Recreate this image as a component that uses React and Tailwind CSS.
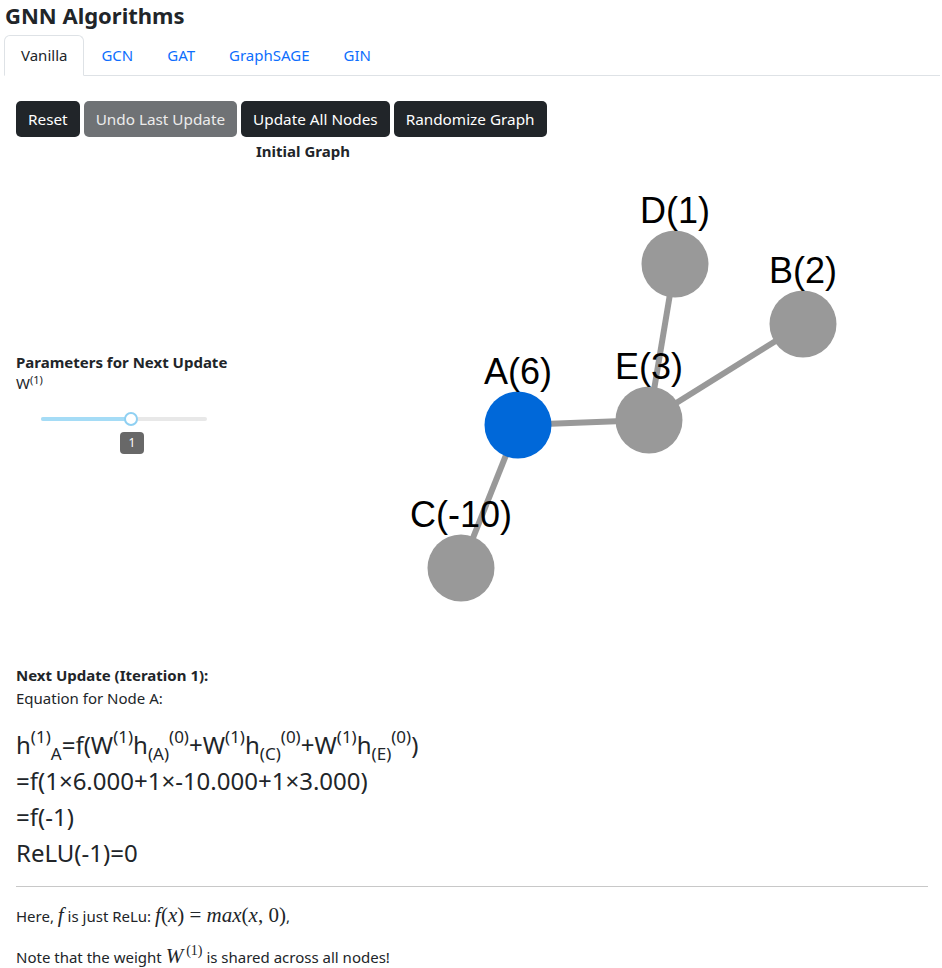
import React from "react";

const nodes = [
  { id: "D", v: 1, x: 335, y: 103 },
  { id: "B", v: 2, x: 463, y: 163 },
  { id: "E", v: 3, x: 309, y: 259 },
  { id: "A", v: 6, x: 178, y: 264, active: true },
  { id: "C", v: -10, x: 121, y: 407 },
];
const byId = Object.fromEntries(nodes.map((n) => [n.id, n]));
const edges = [
  ["D", "E"],
  ["B", "E"],
  ["A", "E"],
  ["A", "C"],
];

function Graph() {
  return (
    <svg width="586" height="476" viewBox="0 0 586 476" className="block shrink-0">
      {edges.map(([a, b]) => (
        <line
          key={a + b}
          x1={byId[a].x}
          y1={byId[a].y}
          x2={byId[b].x}
          y2={byId[b].y}
          stroke="#999999"
          strokeWidth="6"
        />
      ))}
      {nodes.map((n) => (
        <circle key={n.id} cx={n.x} cy={n.y} r="33.5" fill={n.active ? "#0068d9" : "#999999"} />
      ))}
      {nodes.map((n) => (
        <text
          key={n.id + "t"}
          x={n.x}
          y={n.y - 41}
          textAnchor="middle"
          fontFamily="'Liberation Sans', Arial, sans-serif"
          fontSize="36"
          fill="#000"
        >
          {n.id}({n.v})
        </text>
      ))}
    </svg>
  );
}

function Sup({ children }) {
  return <sup className="text-[17px] leading-none align-baseline relative top-[-11px]">{children}</sup>;
}
function Sub({ children }) {
  return <sub className="text-[17px] leading-none align-baseline relative top-[6px]">{children}</sub>;
}

function Term({ node }) {
  return (
    <>
      W<Sup>(1)</Sup>h<Sub>({node})</Sub>
      <Sup>(0)</Sup>
    </>
  );
}

const serif = { fontFamily: "'Liberation Serif', 'DejaVu Serif', serif" };

export default function App() {
  const font = { fontFamily: "'Noto Sans', 'Open Sans', sans-serif" };
  return (
    <div className="bg-white text-[#212529] w-[942px] min-h-[968px]" style={font}>
      <h4 className="text-[22px] font-bold leading-[30px] pl-[5px] m-0">GNN Algorithms</h4>
      <div className="mt-[5px] flex border-b border-[#dee2e6] ml-[4px] mr-[2px] h-[41px]">
        <div className="px-[16px] h-[41px] border border-[#dee2e6] border-b-white rounded-t-[6px] bg-white flex items-center text-[15px] -mb-px">
          Vanilla
        </div>
        {["GCN", "GAT", "GraphSAGE", "GIN"].map((t) => (
          <div key={t} className="px-[17px] h-[41px] flex items-center text-[15px] text-[#0d6efd]">
            {t}
          </div>
        ))}
      </div>

      <div className="px-[16px]">
        <div className="flex gap-[4px] mt-[25px]">
          <button className="h-[36px] px-[12px] rounded-[5px] bg-[#212529] text-white text-[15.3px]">Reset</button>
          <button className="h-[36px] px-[12px] rounded-[5px] bg-[#6f7275] text-[#ececec] text-[15.3px]">
            Undo Last Update
          </button>
          <button className="h-[36px] px-[12px] rounded-[5px] bg-[#212529] text-white text-[15.3px]">
            Update All Nodes
          </button>
          <button className="h-[36px] px-[12px] rounded-[5px] bg-[#212529] text-white text-[15.3px]">
            Randomize Graph
          </button>
        </div>
        <div className="pl-[240px] text-[15px] font-bold leading-[20px] mt-[4px]">Initial Graph</div>

        <div className="flex">
          <div className="w-[324px] shrink-0 flex flex-col justify-center pt-[8px]">
            <div className="text-[15px] font-bold leading-[20px]">Parameters for Next Update</div>
            <div className="text-[15px] leading-[20px] pt-[1px]">
              W<sup className="text-[11px] relative top-[-5px]">(1)</sup>
            </div>
            <div className="ml-[25px] w-[166px] mt-[20px] relative h-[12px]">
              <div className="absolute left-0 right-0 top-[4px] h-[4px] rounded-full bg-[#e8e8e8]" />
              <div className="absolute left-0 w-[90px] top-[4px] h-[4px] rounded-full bg-[#a5dcf6]" />
              <div className="absolute left-[83px] top-[-1px] w-[14px] h-[14px] rounded-full bg-white border-[2px] border-[#8fd0f2]" />
            </div>
            <div className="ml-[104px] mt-[7px] w-[24px] h-[22px] rounded-[4px] bg-[#686868] text-white text-[12px] flex items-center justify-center">
              1
            </div>
          </div>
          <Graph />
        </div>

        <div className="mt-[28px] text-[15px] font-bold leading-[20px]">Next Update (Iteration 1):</div>
        <div className="text-[15px] leading-[20px] mt-[3px]">Equation for Node A:</div>
        <div className="text-[24px] leading-[36px] mt-[19px]">
          <div>
            h<Sup>(1)</Sup>
            <Sub>A</Sub>=f(
            <Term node="A" />+<Term node="C" />+<Term node="E" />)
          </div>
          <div>=f(1×6.000+1×-10.000+1×3.000)</div>
          <div>=f(-1)</div>
          <div>ReLU(-1)=0</div>
        </div>
        <hr className="mt-[15px] border-0 border-t border-[#c8c8c8] mr-[-2px]" />
        <div className="text-[15px] mt-[16px] leading-[24px]">
          Here,{" "}
          <span className="italic text-[21px]" style={serif}>
            f
          </span>{" "}
          is just ReLu:{" "}
          <span className="text-[21px]" style={serif}>
            <i>f</i>(<i>x</i>) = <i>max</i>(<i>x</i>, 0)
          </span>
          ,
        </div>
        <div className="text-[15px] mt-[16px] leading-[24px]">
          Note that the weight{" "}
          <span className="text-[21px]" style={serif}>
            <i>W</i>
            <sup className="text-[14px] relative top-[-8px] ml-[3px]">(1)</sup>
          </span>{" "}
          is shared across all nodes!
        </div>
      </div>
    </div>
  );
}
